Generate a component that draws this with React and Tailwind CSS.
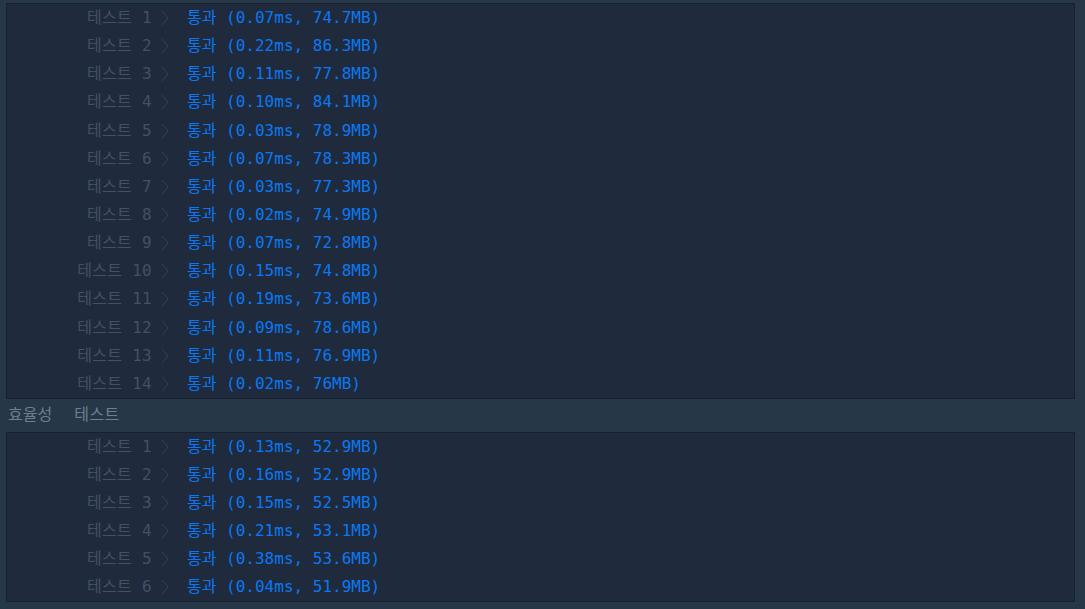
const main = [
  ["0.07ms", "74.7MB"],
  ["0.22ms", "86.3MB"],
  ["0.11ms", "77.8MB"],
  ["0.10ms", "84.1MB"],
  ["0.03ms", "78.9MB"],
  ["0.07ms", "78.3MB"],
  ["0.03ms", "77.3MB"],
  ["0.02ms", "74.9MB"],
  ["0.07ms", "72.8MB"],
  ["0.15ms", "74.8MB"],
  ["0.19ms", "73.6MB"],
  ["0.09ms", "78.6MB"],
  ["0.11ms", "76.9MB"],
  ["0.02ms", "76MB"],
];
const eff = [
  ["0.13ms", "52.9MB"],
  ["0.16ms", "52.9MB"],
  ["0.15ms", "52.5MB"],
  ["0.21ms", "53.1MB"],
  ["0.38ms", "53.6MB"],
  ["0.04ms", "51.9MB"],
];

function Row({ i, t, m, h }) {
  return (
    <div className={`flex items-center ${h}`}>
      <span className="w-[145px] text-right text-[#435163] whitespace-pre tracking-[0.3px]">테스트 {i}</span>
      <svg width="8" height="16" viewBox="0 0 8 16" className="ml-[9px] mr-[18px]">
        <polyline points="1,1 7,8 1,15" fill="none" stroke="#344253" strokeWidth="1" />
      </svg>
      <span className="text-[#0a78f2] whitespace-pre">통과 ({t}, {m})</span>
    </div>
  );
}

export default function App() {
  return (
    <div
      className="w-[1085px] h-[609px] bg-[#263747] overflow-hidden text-[16px] leading-[20px]"
      style={{ fontFamily: '"DejaVu Sans Mono", "Noto Sans CJK KR", monospace' }}
    >
      <div className="pt-[3px] pl-[6px] pr-[10px]">
        <div className="bg-[#1f2a3c] border border-[#17202e]">
          {main.map((r, idx) => (
            <Row key={idx} i={idx + 1} t={r[0]} m={r[1]} h="h-[28.15px]" />
          ))}
        </div>
        <div className="h-[33px] flex items-center pl-[2px] text-[#6f7f90]">
          <span>효율성</span>
          <span className="ml-[22px] tracking-[0.5px]">테스트</span>
        </div>
        <div className="bg-[#1f2a3c] border border-[#17202e]">
          {eff.map((r, idx) => (
            <Row key={idx} i={idx + 1} t={r[0]} m={r[1]} h="h-[28px]" />
          ))}
        </div>
      </div>
    </div>
  );
}
